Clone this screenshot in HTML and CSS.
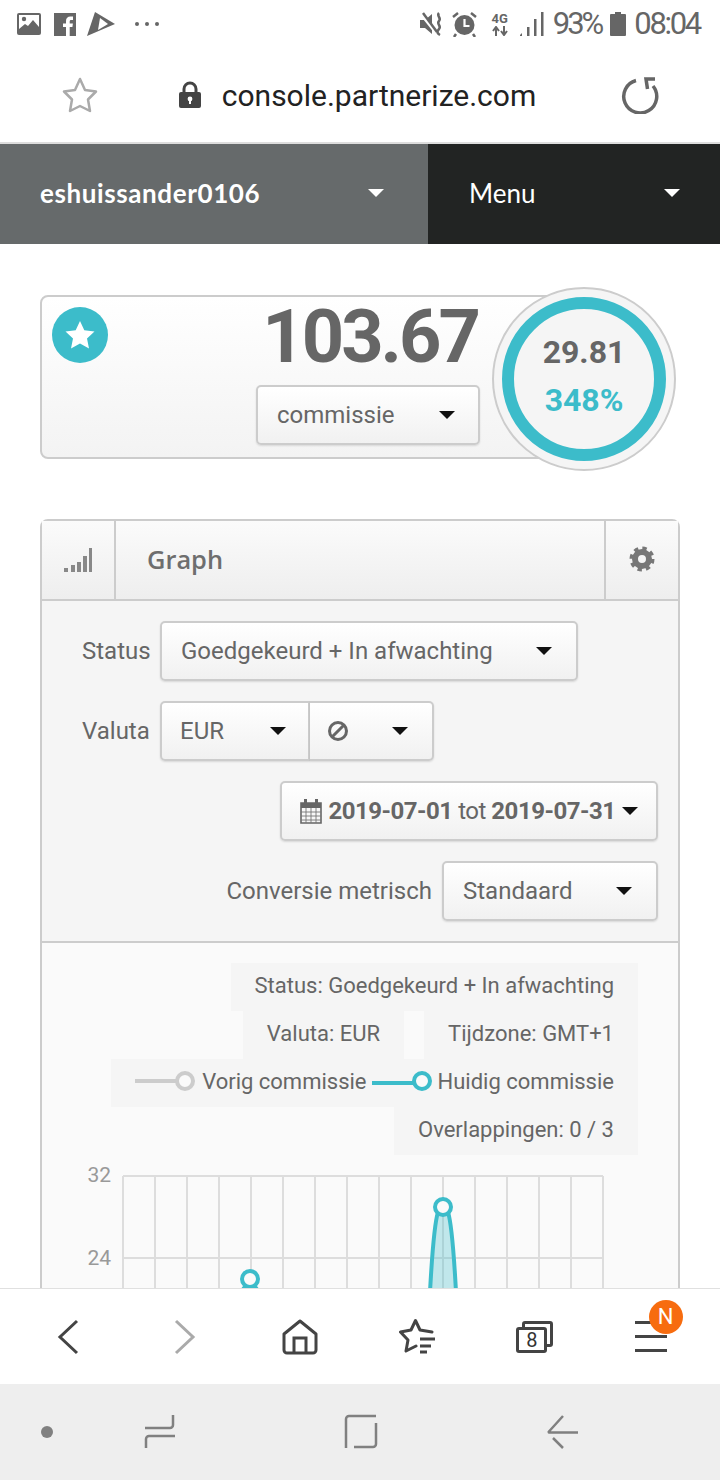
FILE: index.html
```html
<!DOCTYPE html>
<html lang="en">
<head>
    <meta charset="UTF-8">
    <title>Partnerize console</title>
    <link rel="stylesheet" href="styles.css">
</head>
<body>
    <div class="status-bar">
        <div class="status-group status-group--left">
            <svg class="status-icon status-icon--image" width="24" height="24" viewBox="0 0 24 24"><rect x="0" y="1" width="24" height="22" rx="2" fill="#666"/><rect x="2" y="3" width="20" height="14" fill="#fff"/><circle cx="7" cy="7" r="2.200" fill="#666"/><path d="M2 17l6-5 3 2 5-6 6 7v5H2z" fill="#666"/></svg>
            <svg class="status-icon" width="22" height="23" viewBox="0 0 22 23"><rect width="22" height="23" fill="#666"/><path d="M12 23v-9H9v-3.500h3V8c0-3 1.800-4.500 4.300-4.500H19V7h-1.800c-1.200 0-1.500.6-1.500 1.500v2h3.200l-.5 3.500h-2.700v9z" fill="#fff"/></svg>
            <svg class="status-icon" width="28" height="24" viewBox="0 0 28 24"><path d="M8 0l20 12L0 24z" fill="#666"/><path d="M13 6l8 6-10 6z" fill="#fff"/></svg>
            <div class="status-dots"><span></span><span></span><span></span></div>
        </div>
        <div class="status-group status-group--right">
            <svg width="26" height="26" viewBox="0 0 26 26"><path d="M1 9h5l7-6v20l-7-6H1z" fill="#666"/><path d="M2 3l16 20" stroke="#fff" stroke-width="3"/><path d="M4 2l14 19" stroke="#666" stroke-width="2.500"/><path d="M20 2c-3 3 3 5 0 8s3 5 0 8-1 5 1 6" fill="none" stroke="#666" stroke-width="2.500"/></svg>
            <svg class="alarm" width="25" height="26" viewBox="0 0 25 26"><circle cx="12.500" cy="14" r="10" fill="#666"/><path d="M12.500 8v7h5" fill="none" stroke="#fff" stroke-width="2.200"/><path d="M1 6l5-4M24 6l-5-4M4 23l-2 3M21 23l2 3" stroke="#666" stroke-width="2.500"/></svg>
            <div class="network">
                <span class="network__label">4G</span>
                <svg width="20" height="10" viewBox="0 0 20 10"><path d="M6 10V3M3 5l3-4 3 4M14 0v7M11 5l3 4 3-4" fill="none" stroke="#666" stroke-width="2"/></svg>
            </div>
            <svg class="signal" width="26" height="26" viewBox="0 0 26 26"><path d="M1 25h2v-3L1 24zM8 25h2.500V16H8zM15 25h2.500V8H15zM22 25h2.500V1H22z" fill="#666"/></svg>
            <span class="status-text status-text--pct">93%</span>
            <svg class="battery" width="16" height="24" viewBox="0 0 16 24"><path d="M5 0h6v2h4a1 1 0 0 1 1 1v20a1 1 0 0 1-1 1H1a1 1 0 0 1-1-1V3a1 1 0 0 1 1-1h4z" fill="#666"/></svg>
            <span class="status-text">08:04</span>
        </div>
    </div>

    <div class="url-bar">
        <svg width="38" height="36" viewBox="0 0 38 36"><path d="M19 2l5 11 11 1.500-8 8 2 11.500L19 29l-10 5 2-11.500-8-8L14 13z" fill="none" stroke="#aaa" stroke-width="2.500" stroke-linejoin="round"/></svg>
        <div class="url-bar__address">
            <svg width="24" height="28" viewBox="0 0 24 28"><path d="M6 12V8a6 6 0 0 1 12 0v4" fill="none" stroke="#444" stroke-width="3"/><rect x="1" y="11" width="22" height="16" rx="2" fill="#444"/><circle cx="12" cy="18" r="2.400" fill="#fff"/><rect x="11" y="18" width="2" height="5" fill="#fff"/></svg>
            <span>console.partnerize.com</span>
        </div>
        <svg width="38" height="38" viewBox="0 0 38 38"><path d="M15 4.500A16.500 16.500 0 1 0 32 10" fill="none" stroke="#666" stroke-width="3.500"/><path d="M34 3H25l1.500 10" fill="none" stroke="#666" stroke-width="3.500"/></svg>
    </div>

    <nav class="top-nav">
        <div class="top-nav__user">
            <span>eshuissander0106</span>
            <i class="caret caret--white"></i>
        </div>
        <div class="top-nav__menu">
            <span>Menu</span>
            <i class="caret caret--white"></i>
        </div>
    </nav>

    <main class="content">
        <div class="summary">
            <div class="summary__badge">
                <svg width="32" height="32" viewBox="0 0 32 32"><path d="M16 2l4.300 9.300 10.200 1.200-7.500 7 2 10L16 24.500 7 29.500l2-10-7.500-7 10.200-1.200z" fill="#fff"/></svg>
            </div>
            <div class="summary__main">
                <div class="summary__value">103.67</div>
                <div class="btn btn--metric">
                    <span>commissie</span>
                    <i class="caret"></i>
                </div>
            </div>
            <div class="ring">
                <div class="ring__inner">
                    <div class="ring__prev">29.81</div>
                    <div class="ring__pct">348%</div>
                </div>
            </div>
        </div>

        <section class="panel">
            <header class="panel__head">
                <div class="panel__icon">
                    <svg width="30" height="26" viewBox="0 0 30 26"><path d="M1 21h4v4H1zM8 18h4v7H8zM14 15h4v10h-4zM20 9h4v16h-4zM26 1h3v24h-3z" fill="#888"/></svg>
                </div>
                <h2 class="panel__title">Graph</h2>
                <div class="panel__gear">
                    <svg width="26" height="26" viewBox="0 0 26 26"><circle cx="13" cy="13" r="7" fill="none" stroke="#777" stroke-width="6"/><circle cx="13" cy="13" r="10.500" fill="none" stroke="#777" stroke-width="4" stroke-dasharray="4.250 4"/></svg>
                </div>
            </header>

            <div class="filters">
                <div class="filters__row">
                    <label class="filters__label filters__label--short">Status</label>
                    <div class="btn btn--status"><span>Goedgekeurd + In afwachting</span><i class="caret"></i></div>
                </div>
                <div class="filters__row">
                    <label class="filters__label filters__label--short">Valuta</label>
                    <div class="btn-group">
                        <div class="btn btn--currency"><span>EUR</span><i class="caret"></i></div>
                        <div class="btn btn--ban">
                            <svg width="22" height="22" viewBox="0 0 22 22"><circle cx="11" cy="11" r="8.500" fill="none" stroke="#666" stroke-width="3"/><path d="M5 17L17 5" stroke="#666" stroke-width="3"/></svg>
                            <i class="caret"></i>
                        </div>
                    </div>
                </div>
                <div class="filters__row filters__row--end">
                    <div class="btn btn--date">
                        <svg width="22" height="26" viewBox="0 0 22 26"><path d="M1 5h20v20H1z" fill="none" stroke="#666" stroke-width="1.600"/><path d="M1 5h20v5H1z" fill="#666"/><path d="M5.500 1v6M16.500 1v6" stroke="#666" stroke-width="3"/><path d="M1 14h20M1 18h20M1 22h20M6 10v15M11 10v15M16 10v15" stroke="#777" stroke-width=".9"/></svg>
                        <span class="btn__date-text"><b>2019-07-01</b> tot <b>2019-07-31</b></span>
                        <i class="caret"></i>
                    </div>
                </div>
                <div class="filters__row filters__row--end">
                    <label class="filters__label">Conversie metrisch</label>
                    <div class="btn btn--conversion"><span>Standaard</span><i class="caret"></i></div>
                </div>
            </div>

            <div class="chart">
                <div class="legend">
                    <div class="legend__row"><span class="legend__item">Status: Goedgekeurd + In afwachting</span></div>
                    <div class="legend__row">
                        <span class="legend__item">Valuta: EUR</span>
                        <span class="legend__item">Tijdzone: GMT+1</span>
                    </div>
                    <div class="legend__row">
                        <span class="legend__item">
                            <svg width="62" height="24" viewBox="0 0 62 24"><path d="M0 12h42" stroke="#ccc" stroke-width="4"/><circle cx="50" cy="12" r="8" fill="#fafafa" stroke="#ccc" stroke-width="4"/></svg>
                            <span class="legend__name">Vorig commissie</span>
                            <svg class="legend__swatch" width="62" height="24" viewBox="0 0 62 24"><path d="M0 14h42" stroke="#3cbcca" stroke-width="4"/><circle cx="50" cy="12" r="8" fill="#fafafa" stroke="#3cbcca" stroke-width="4"/></svg>
                            <span class="legend__name">Huidig commissie</span>
                        </span>
                    </div>
                    <div class="legend__row"><span class="legend__item">Overlappingen: 0 / 3</span></div>
                </div>
                <svg class="chart__plot" width="636" height="145" viewBox="42 1155 636 145">
                    <g stroke="#ddd" stroke-width="2" fill="none">
                        <path d="M123 1176h480M123 1258h480M123 1176v130M155 1176v130M187 1176v130M219 1176v130M251 1176v130M283 1176v130M315 1176v130M347 1176v130M379 1176v130M411 1176v130M443 1176v130M475 1176v130M507 1176v130M539 1176v130M571 1176v130M603 1176v130"/>
                    </g>
                    <g fill="#999" font-size="21" text-anchor="end">
                        <text x="111" y="1182">32</text>
                        <text x="111" y="1265">24</text>
                    </g>
                    <path d="M430 1292C432 1255 434 1225 438 1212L443 1205L448 1212C452 1225 454 1255 456 1292z" fill="#3cbcca" fill-opacity=".3"/>
                    <path d="M430 1292C432 1255 434 1225 438 1212L443 1205L448 1212C452 1225 454 1255 456 1292" fill="none" stroke="#3cbcca" stroke-width="4"/>
                    <path d="M238 1296L250 1280L262 1296" fill="none" stroke="#3cbcca" stroke-width="4"/>
                    <circle cx="443" cy="1207" r="8" fill="#fafafa" stroke="#3cbcca" stroke-width="4"/>
                    <circle cx="250" cy="1279" r="8" fill="#fafafa" stroke="#3cbcca" stroke-width="4"/>
                </svg>
            </div>
        </section>
    </main>

    <div class="browser-bar">
        <div class="browser-bar__item">
            <svg width="24" height="36" viewBox="0 0 24 36"><path d="M21 2L4 18l17 16" fill="none" stroke="#444" stroke-width="3"/></svg>
        </div>
        <div class="browser-bar__item">
            <svg width="24" height="36" viewBox="0 0 24 36"><path d="M3 2l17 16L3 34" fill="none" stroke="#aaa" stroke-width="3"/></svg>
        </div>
        <div class="browser-bar__item">
            <svg class="home-icon" width="36" height="36" viewBox="0 0 36 36"><path d="M5 34h26a3 3 0 0 0 3-3V15L18 2 2 15v16a3 3 0 0 0 3 3z" fill="none" stroke="#444" stroke-width="3" stroke-linejoin="round"/><path d="M12 34V19h12v15" fill="none" stroke="#444" stroke-width="3"/></svg>
        </div>
        <div class="browser-bar__item">
            <svg width="38" height="38" viewBox="0 0 38 38"><path d="M17 28L7 33l2-11-7.500-8L12 12l4.500-9.500L21 12l12 2" fill="none" stroke="#444" stroke-width="3" stroke-linejoin="round" stroke-linecap="round"/><path d="M21 21h15M21 28h11M21 34h7" stroke="#444" stroke-width="3"/></svg>
        </div>
        <div class="browser-bar__item">
            <div class="tabs-icon">
                <div class="tabs-icon__back"></div>
                <div class="tabs-icon__front">8</div>
            </div>
        </div>
        <div class="browser-bar__item">
            <div class="menu-icon">
                <span></span><span></span><span></span>
                <div class="menu-icon__badge">N</div>
            </div>
        </div>
    </div>

    <div class="system-nav">
        <span class="system-nav__dot"></span>
        <svg class="system-nav__recent" width="34" height="40" viewBox="0 0 34 40"><path d="M2 16h25a3 3 0 0 0 3-3V3M32 24H6a3 3 0 0 0-3 3v9" fill="none" stroke="#808080" stroke-width="2.500"/></svg>
        <svg class="system-nav__home" width="34" height="40" viewBox="0 0 34 40"><path d="M32 4H5a3 3 0 0 0-3 3v29M32 11v21a3 3 0 0 1-3 3H10" fill="none" stroke="#808080" stroke-width="2.500"/></svg>
        <svg class="system-nav__back" width="34" height="40" viewBox="0 0 34 40"><path d="M17 4L3 19.500q-1 1 1 1h28M7 26l10 10" fill="none" stroke="#808080" stroke-width="2.500"/></svg>
    </div>
</body>
</html>
```

FILE: styles.css
```css
* {
    box-sizing: border-box;
}

html, body {
    height: 100%;
}

body {
    width: 720px;
    height: 1480px;
    margin: 0;
    display: flex;
    flex-direction: column;
    overflow: hidden;
    background: #fff;
    color: #666;
    font-family: Roboto, "Liberation Sans", sans-serif;
}

/* phone status bar */
.status-bar {
    height: 48px;
    flex: none;
    display: flex;
    align-items: center;
    justify-content: space-between;
    padding: 0 20px 0 17px;
}

.status-group {
    display: flex;
    align-items: center;
}

.status-group--left {
    gap: 11px;
}

.status-icon--image {
    margin-right: 2px;
}

.status-dots {
    display: flex;
    gap: 6px;
    margin-left: 9px;
}

.status-dots span {
    width: 4px;
    height: 4px;
    border-radius: 50%;
    background: #666;
}

.alarm {
    margin-left: 7px;
}

.network {
    display: flex;
    flex-direction: column;
    align-items: center;
    margin-left: 13px;
    width: 20px;
}

.network__label {
    font-size: 13px;
    font-weight: 700;
    line-height: 14px;
}

.signal {
    margin-left: 9px;
}

.status-text {
    font-size: 31px;
    letter-spacing: -2.3px;
    line-height: 36px;
    color: #666;
}

.status-text--pct {
    margin: 0 9px 0 8px;
    letter-spacing: -3px;
}

.battery {
    margin-right: 8px;
}

/* browser url bar */
.url-bar {
    height: 96px;
    flex: none;
    display: flex;
    align-items: center;
    justify-content: space-between;
    padding: 0 61px;
    border-bottom: 2px solid #ddd;
}

.url-bar__address {
    display: flex;
    align-items: center;
    gap: 20px;
    margin-right: 6px;
    font-size: 30px;
    color: #222;
}

/* site header */
.top-nav {
    height: 100px;
    flex: none;
    display: flex;
    color: #fff;
    font-family: Lato, sans-serif;
    font-size: 26px;
}

.top-nav__user,
.top-nav__menu {
    display: flex;
    align-items: center;
    justify-content: space-between;
    padding-bottom: 3px;
}

.top-nav__user {
    width: 428px;
    padding-left: 40px;
    padding-right: 44px;
    background: #666a6b;
    font-weight: 700;
    letter-spacing: .6px;
}

.top-nav__menu {
    width: 292px;
    padding-left: 41px;
    padding-right: 40px;
    background: #222423;
}

.caret {
    display: block;
    flex: none;
    width: 0;
    height: 0;
    border-left: 8px solid transparent;
    border-right: 8px solid transparent;
    border-top: 8px solid #111;
}

.caret--white {
    border-top-color: #fff;
}

/* page content */
.content {
    flex: 1;
    min-height: 0;
    overflow: hidden;
    padding: 51px 40px 0;
}

.summary {
    position: relative;
    width: 520px;
    height: 164px;
    display: flex;
    padding: 0 78px 0 10px;
    border: 2px solid #ccc;
    border-radius: 8px;
    background: linear-gradient(#fff, #f3f3f3);
}

.summary__badge {
    width: 56px;
    height: 56px;
    margin-top: 10px;
    flex: none;
    display: flex;
    align-items: center;
    justify-content: center;
    border-radius: 50%;
    background: #3cbcca;
}

.summary__main {
    flex: 1;
    display: flex;
    flex-direction: column;
    align-items: flex-end;
}

.summary__value {
    height: 88px;
    margin-right: 2px;
    font-size: 74px;
    font-weight: 700;
    line-height: 80px;
    letter-spacing: -3px;
    color: #666;
}

.btn--metric {
    width: 224px;
    padding: 0 23px 0 19px;
}

.ring {
    position: absolute;
    top: -10px;
    right: -118px;
    width: 184px;
    height: 184px;
    padding: 8px;
    border: 2px solid #ccc;
    border-radius: 50%;
    background: #f5f5f5;
}

.ring__inner {
    height: 100%;
    display: flex;
    flex-direction: column;
    align-items: center;
    justify-content: center;
    gap: 12px;
    padding-bottom: 6px;
    border: 12px solid #3cbcca;
    border-radius: 50%;
    font-size: 32px;
    font-weight: 700;
    line-height: 36px;
}

.ring__pct {
    color: #3cbcca;
}

/* buttons */
.btn {
    height: 60px;
    display: flex;
    align-items: center;
    justify-content: space-between;
    border: 2px solid #ccc;
    border-radius: 5px;
    background: linear-gradient(#fff, #f1f1f1);
    box-shadow: 0 1px 2px rgba(0, 0, 0, .12);
    font-size: 24px;
    color: #666;
}

.btn--status {
    width: 418px;
    padding: 0 24px 0 19px;
}

.btn-group {
    display: flex;
}

.btn--currency {
    width: 150px;
    padding: 0 22px 0 18px;
    border-radius: 5px 0 0 5px;
}

.btn--ban {
    width: 124px;
    padding: 0 24px 0 17px;
    border-left: 0;
    border-radius: 0 5px 5px 0;
}

.btn--date {
    width: 378px;
    padding: 0 18px;
}

.btn__date-text {
    letter-spacing: -.48px;
    white-space: nowrap;
}

.btn--conversion {
    width: 216px;
    padding: 0 24px 0 19px;
}

/* graph panel */
.panel {
    margin-top: 60px;
    border: 2px solid #ccc;
    border-bottom: 0;
    border-radius: 8px 8px 0 0;
    background: #f5f5f5;
}

.panel__head {
    height: 80px;
    display: flex;
    align-items: stretch;
    border-bottom: 2px solid #ccc;
    background: linear-gradient(#fbfbfb, #eee);
}

.panel__icon {
    width: 74px;
    display: flex;
    align-items: center;
    justify-content: center;
    border-right: 2px solid #ccc;
}

.panel__title {
    flex: 1;
    margin: 0;
    padding-left: 31px;
    font-family: "Open Sans", sans-serif;
    font-size: 25.4px;
    font-weight: 600;
    line-height: 77px;
    color: #6e6e6e;
}

.panel__gear {
    width: 74px;
    padding-top: 25px;
    text-align: center;
    border-left: 2px solid #ccc;
}

.filters {
    display: flex;
    flex-direction: column;
    gap: 20px;
    padding: 20px 20px 20px 40px;
    border-bottom: 2px solid #ccc;
}

.filters__row {
    display: flex;
    align-items: center;
    gap: 10px;
}

.filters__row--end {
    justify-content: flex-end;
}

.filters__label {
    font-size: 24px;
    color: #666;
    white-space: nowrap;
}

.filters__label--short {
    width: 68px;
}

.chart {
    padding-top: 20px;
    background: #fafafa;
}

.legend {
    display: flex;
    flex-direction: column;
    align-items: flex-end;
    padding-right: 40px;
    font-size: 22px;
}

.legend__row {
    height: 48px;
    display: flex;
    gap: 20px;
}

.legend__item {
    display: flex;
    align-items: center;
    height: 48px;
    padding: 0 24px 4px;
    background: #f5f5f5;
    white-space: nowrap;
}

.legend__name {
    margin-left: 5px;
}

.legend__swatch {
    margin-left: 5px;
}

.legend__swatch + .legend__name {
    margin-left: 4px;
}

.chart__plot {
    display: block;
}

/* browser bottom toolbar */
.browser-bar {
    position: relative;
    height: 96px;
    flex: none;
    display: grid;
    grid-template-columns: repeat(6, 1fr);
    padding: 0 10px;
    border-top: 1px solid #e0e0e0;
    background: #fff;
}

.browser-bar__item {
    display: flex;
    align-items: center;
    justify-content: center;
}

.home-icon {
    margin-right: 3px;
}

.tabs-icon {
    position: relative;
    width: 37px;
    height: 32px;
}

.tabs-icon__back {
    position: absolute;
    top: 0;
    right: 0;
    width: 31px;
    height: 26px;
    border: 3px solid #444;
    border-radius: 3px;
}

.tabs-icon__front {
    position: absolute;
    left: 0;
    bottom: 0;
    width: 31px;
    height: 26px;
    border: 3px solid #444;
    border-radius: 3px;
    background: #fff;
    color: #333;
    font-size: 20px;
    line-height: 20px;
    text-align: center;
}

.menu-icon {
    position: relative;
    width: 32px;
    height: 31px;
    margin-right: 2px;
    display: flex;
    flex-direction: column;
    justify-content: space-between;
}

.menu-icon span {
    height: 3px;
    background: #444;
}

.menu-icon__badge {
    position: absolute;
    top: -21px;
    left: 14px;
    width: 34px;
    height: 34px;
    border-radius: 50%;
    background: #f76c0f;
    color: #fff;
    font-size: 22px;
    line-height: 34px;
    text-align: center;
}

/* android nav */
.system-nav {
    height: 96px;
    flex: none;
    display: flex;
    align-items: center;
    padding-left: 41px;
    background: #eee;
}

.system-nav__dot {
    width: 12px;
    height: 12px;
    border-radius: 50%;
    background: #808080;
}

.system-nav__recent {
    margin-left: 90px;
}

.system-nav__home {
    margin-left: 167px;
}

.system-nav__back {
    margin-left: 168px;
}
```
